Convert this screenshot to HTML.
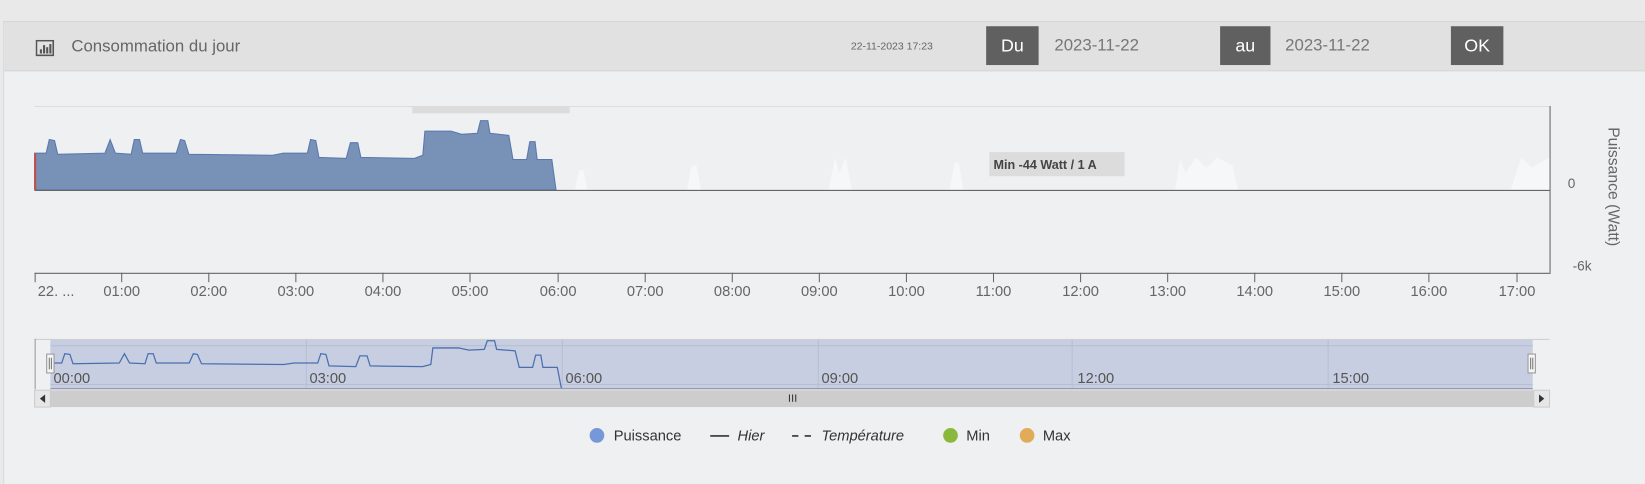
<!DOCTYPE html>
<html><head><meta charset="utf-8"><style>
html,body{margin:0;padding:0;width:1645px;height:480px;overflow:hidden;background:#e9e9ea;font-family:"Liberation Sans",sans-serif}
#w{position:absolute;left:0;top:0;width:1568px;height:458px;transform:scale(1.04911);transform-origin:0 0}
.p{position:absolute}
.btn{position:absolute;top:25px;height:37px;background:#606060;color:#fff;font-size:17px;line-height:37px;text-align:center}
.dt{position:absolute;top:25px;line-height:37px;font-size:16px;color:#777}
</style></head><body><div id="w">
<div class="p" style="left:3px;top:20px;width:1565px;height:440px;background:#eff0f2;border-top:1px solid #d6d6d6;border-left:1px solid #d8d8d8"></div>
<div class="p" style="left:4px;top:21px;width:1564px;height:46px;background:#e0e1e0;border-bottom:1px solid #d6d6d6"></div>
<svg class="p" style="left:34px;top:38px" width="18" height="16" viewBox="0 0 18 16"><rect x="0.75" y="0.75" width="16" height="14" fill="none" stroke="#555" stroke-width="1.5"/><rect x="4" y="9" width="2" height="4" fill="#555"/><rect x="7" y="5" width="2" height="8" fill="#555"/><rect x="10" y="7" width="2" height="6" fill="#555"/><rect x="13" y="4" width="2" height="9" fill="#555"/></svg>
<div class="p" style="left:68px;top:36px;font-size:16px;color:#666">Consommation du jour</div>
<div class="p" style="left:811px;top:39px;font-size:10px;color:#666">22-11-2023 17:23</div>
<div class="btn" style="left:940px;width:50px">Du</div>
<div class="dt" style="left:1005px">2023-11-22</div>
<div class="btn" style="left:1163px;width:48px">au</div>
<div class="dt" style="left:1225px">2023-11-22</div>
<div class="btn" style="left:1383px;width:50px">OK</div>

<svg class="p" style="left:0;top:0" width="1568" height="458">
<line x1="33" y1="101.5" x2="1477" y2="101.5" stroke="#ddd"/>
<rect x="393" y="101" width="150" height="7" fill="#dcdcdc"/>
<g fill="#f6f7f8"><path d="M548,181 L552,162 L556,162 L560,181Z M655,181 L659,158 L664,158 L668,181Z M790,181 L796,150 L800,165 L806,150 L812,181Z M905,181 L910,155 L914,155 L918,181Z M1120,181 L1125,152 L1130,165 L1140,150 L1150,160 L1160,150 L1175,158 L1180,181Z M1440,181 L1450,150 L1460,160 L1477,150 L1477,181Z"/></g>
<path d="M33,181 L33,146 L44,146 L47,133 L52,134 L55,147 L100,146 L105,133 L110,146 L125,147 L128,133 L133,133 L136,146 L168,146 L172,133 L176,134 L180,147 L260,148 L270,146 L293,146 L296,133 L301,134 L304,150 L330,151 L334,136 L341,136 L344,150 L395,151 L403,148 L405,125 L430,125 L440,128 L455,127 L458,115 L465,115 L467,127 L485,129 L489,152 L502,152 L505,135 L510,135 L512,152 L526,152 L530,181 Z" fill="#7891b7" stroke="#5a78b0" stroke-width="1"/>
<line x1="33.5" y1="146" x2="33.5" y2="181" stroke="#c0504d" stroke-width="2"/>
<line x1="33" y1="181.5" x2="1477" y2="181.5" stroke="#666" stroke-width="1"/>
<line x1="1477.5" y1="101" x2="1477.5" y2="260" stroke="#666"/>
<line x1="33" y1="260.5" x2="1478" y2="260.5" stroke="#666"/>
<g stroke="#666"><line x1="33.5" y1="260" x2="33.5" y2="269"/>
<line x1="116" y1="260" x2="116" y2="269"/><line x1="199" y1="260" x2="199" y2="269"/><line x1="282" y1="260" x2="282" y2="269"/><line x1="365" y1="260" x2="365" y2="269"/><line x1="448" y1="260" x2="448" y2="269"/><line x1="532" y1="260" x2="532" y2="269"/><line x1="615" y1="260" x2="615" y2="269"/><line x1="698" y1="260" x2="698" y2="269"/><line x1="781" y1="260" x2="781" y2="269"/><line x1="864" y1="260" x2="864" y2="269"/><line x1="947" y1="260" x2="947" y2="269"/><line x1="1030" y1="260" x2="1030" y2="269"/><line x1="1113" y1="260" x2="1113" y2="269"/><line x1="1196" y1="260" x2="1196" y2="269"/><line x1="1279" y1="260" x2="1279" y2="269"/><line x1="1362" y1="260" x2="1362" y2="269"/><line x1="1446" y1="260" x2="1446" y2="269"/></g>
<g font-family="Liberation Sans, sans-serif" font-size="14" fill="#666" text-anchor="middle">
<text x="36" y="282" text-anchor="start">22. ...</text>
<text x="116" y="282">01:00</text><text x="199" y="282">02:00</text><text x="282" y="282">03:00</text><text x="365" y="282">04:00</text><text x="448" y="282">05:00</text><text x="532" y="282">06:00</text><text x="615" y="282">07:00</text><text x="698" y="282">08:00</text><text x="781" y="282">09:00</text><text x="864" y="282">10:00</text><text x="947" y="282">11:00</text><text x="1030" y="282">12:00</text><text x="1113" y="282">13:00</text><text x="1196" y="282">14:00</text><text x="1279" y="282">15:00</text><text x="1362" y="282">16:00</text><text x="1446" y="282">17:00</text>
<text x="1498" y="179" font-size="13">0</text>
<text x="1508" y="258" font-size="13">-6k</text>
<text transform="translate(1533,178) rotate(90)" font-size="15">Puissance (Watt)</text>
</g>
<rect x="943" y="145" width="129" height="23" fill="#dcdcdc"/>
<text x="947" y="161" font-family="Liberation Sans, sans-serif" font-size="12" font-weight="bold" fill="#444">Min -44 Watt / 1 A</text>

<line x1="33" y1="323.5" x2="1477" y2="323.5" stroke="#ccc"/>
<line x1="33.5" y1="323" x2="33.5" y2="371" stroke="#999"/>
<rect x="48" y="324" width="1413" height="47" fill="#c8cee1"/>
<g stroke="#b8bfd3"><line x1="48" y1="329.5" x2="1461" y2="329.5"/><line x1="48" y1="366.5" x2="1461" y2="366.5"/>
<line x1="292" y1="324" x2="292" y2="371"/><line x1="536" y1="324" x2="536" y2="371"/><line x1="780" y1="324" x2="780" y2="371"/><line x1="1022" y1="324" x2="1022" y2="371"/><line x1="1266" y1="324" x2="1266" y2="371"/></g>
<path transform="matrix(0.98,0,0,0.686,15.7,245.9)" vector-effect="non-scaling-stroke" d="M33,146 L44,146 L47,133 L52,134 L55,147 L100,146 L105,133 L110,146 L125,147 L128,133 L133,133 L136,146 L168,146 L172,133 L176,134 L180,147 L260,148 L270,146 L293,146 L296,133 L301,134 L304,150 L330,151 L334,136 L341,136 L344,150 L395,151 L403,148 L405,125 L430,125 L440,128 L455,127 L458,115 L465,115 L467,127 L485,129 L489,152 L502,152 L505,135 L510,135 L512,152 L526,152 L530,181" fill="none" stroke="#4a6fb0" stroke-width="1.2"/>
<line x1="48" y1="370.5" x2="1461" y2="370.5" stroke="#8a93ad"/>
<g font-family="Liberation Sans, sans-serif" font-size="14" fill="#555"><text x="51" y="365">00:00</text><text x="295" y="365">03:00</text><text x="539" y="365">06:00</text><text x="783" y="365">09:00</text><text x="1027" y="365">12:00</text><text x="1270" y="365">15:00</text></g>
<rect x="44.5" y="337.5" width="7" height="18" fill="#f4f4f4" stroke="#999"/>
<line x1="47" y1="341" x2="47" y2="352" stroke="#777"/><line x1="49" y1="341" x2="49" y2="352" stroke="#777"/>
<rect x="1456.5" y="337.5" width="7" height="18" fill="#f4f4f4" stroke="#999"/>
<line x1="1459" y1="341" x2="1459" y2="352" stroke="#777"/><line x1="1461" y1="341" x2="1461" y2="352" stroke="#777"/>
<rect x="33" y="372" width="1444" height="16" fill="#cdcdcd"/>
<rect x="33" y="372" width="15" height="16" fill="#e6e6e6" stroke="#ccc"/>
<rect x="1462" y="372" width="15" height="16" fill="#e6e6e6" stroke="#ccc"/>
<path d="M43,376 L38,380 L43,384Z" fill="#333"/><path d="M1467,376 L1472,380 L1467,384Z" fill="#333"/>
<g stroke="#333"><line x1="752.5" y1="376" x2="752.5" y2="383"/><line x1="755.5" y1="376" x2="755.5" y2="383"/><line x1="758.5" y1="376" x2="758.5" y2="383"/></g>

<g font-family="Liberation Sans, sans-serif" font-size="14" fill="#333">
<circle cx="569" cy="415" r="7" fill="#7798d8"/><text x="585" y="420">Puissance</text>
<line x1="677" y1="415.5" x2="695" y2="415.5" stroke="#333" stroke-width="1.5"/><text x="703" y="420" font-style="italic">Hier</text>
<line x1="755" y1="415.5" x2="776" y2="415.5" stroke="#333" stroke-width="1.5" stroke-dasharray="6,6"/><text x="783" y="420" font-style="italic">Température</text>
<circle cx="906" cy="415" r="7" fill="#8ab83a"/><text x="921" y="420">Min</text>
<circle cx="979" cy="415" r="7" fill="#e0ac5a"/><text x="994" y="420">Max</text>
</g>
</svg>
</div></body></html>
